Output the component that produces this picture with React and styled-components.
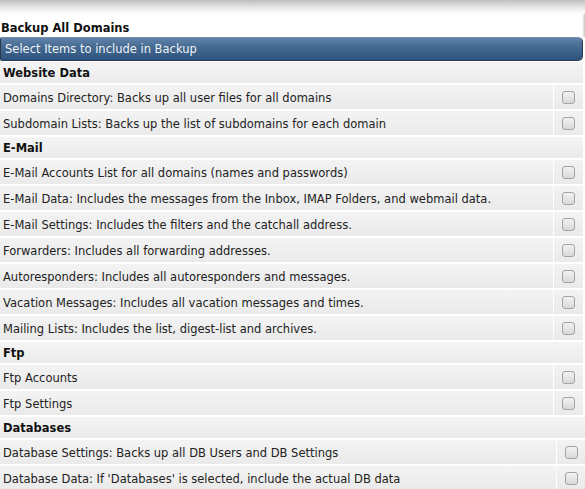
import React from 'react';
import styled, { createGlobalStyle } from 'styled-components';

const GlobalStyle = createGlobalStyle`
  body {
    margin: 0;
    background: #fff;
    font-family: "DejaVu Sans", Verdana, sans-serif;
    font-size: 11.5px;
    color: #222;
  }
`

const Page = styled.div`
  width: 585px;
`

const TopArea = styled.div`
  box-shadow: inset -3px 0 3px -2px #b5b5b5;
`

const TopShade = styled.div`
  height: 14px;
  background: linear-gradient(#bfbfbf, #eaeaea 60%, #fff);
`

const Title = styled.h1`
  margin: 0;
  height: 23px;
  line-height: 28px;
  padding-left: 1px;
  font-size: 11.5px;
  font-weight: bold;
  color: #111;
`

const HeaderBar = styled.div`
  width: 583px;
  height: 24px;
  box-sizing: border-box;
  margin-bottom: 1px;
  padding-left: 4px;
  line-height: 23px;
  color: #eef2f7;
  background: linear-gradient(#5f83aa, #44678e 45%, #2d5480);
  border: 1px solid #2a3a4c;
  border-top-color: #7a8ea5;
  border-radius: 2px 5px 5px 2px;
`

const Section = styled.div`
  display: flex;
  flex-direction: column;
  gap: 2px;
  width: ${({ wide }) => wide ? '585px' : '583px'};
  margin-bottom: 2px;
`

const SectionHead = styled.div`
  height: 21px;
  box-sizing: border-box;
  padding: 1px 0 0 3px;
  line-height: 21px;
  font-weight: bold;
  color: #111;
  background: linear-gradient(#f4f4f4, #ebebeb);
`

const Row = styled.div`
  display: flex;
  gap: 1px;
  height: 24px;
`

const Label = styled.div`
  flex: 1;
  box-sizing: border-box;
  padding: 1px 0 0 3px;
  line-height: 24px;
  white-space: nowrap;
  overflow: hidden;
  background: linear-gradient(#f3f3f3, #eaeaea);
`

const CheckCell = styled.div`
  width: ${({ wide }) => wide ? '28px' : '29px'};
  display: flex;
  align-items: center;
  justify-content: center;
  background: linear-gradient(#f3f3f3, #eaeaea);
`

const Check = styled.input.attrs({ type: 'checkbox' })`
  appearance: none;
  margin: 0;
  width: 13px;
  height: 13px;
  border: 1px solid #a3a3a3;
  border-radius: 3px;
  background: linear-gradient(#f2f2f2, #d9d9d9);
`

const sections = [
  {
    title: 'Website Data',
    items: [
      'Domains Directory: Backs up all user files for all domains',
      'Subdomain Lists: Backs up the list of subdomains for each domain',
    ],
  },
  {
    title: 'E-Mail',
    items: [
      'E-Mail Accounts List for all domains (names and passwords)',
      'E-Mail Data: Includes the messages from the Inbox, IMAP Folders, and webmail data.',
      'E-Mail Settings: Includes the filters and the catchall address.',
      'Forwarders: Includes all forwarding addresses.',
      'Autoresponders: Includes all autoresponders and messages.',
      'Vacation Messages: Includes all vacation messages and times.',
      'Mailing Lists: Includes the list, digest-list and archives.',
    ],
  },
  {
    title: 'Ftp',
    items: ['Ftp Accounts', 'Ftp Settings'],
  },
  {
    title: 'Databases',
    wide: true,
    items: [
      'Database Settings: Backs up all DB Users and DB Settings',
      "Database Data: If 'Databases' is selected, include the actual DB data",
    ],
  },
]

export default function App() {
  return (
    <Page>
      <GlobalStyle />
      <TopArea>
        <TopShade />
        <Title>Backup All Domains</Title>
      </TopArea>
      <HeaderBar>Select Items to include in Backup</HeaderBar>
      {sections.map(section => (
        <Section key={section.title} wide={section.wide}>
          <SectionHead>{section.title}</SectionHead>
          {section.items.map(item => (
            <Row key={item}>
              <Label>{item}</Label>
              <CheckCell wide={section.wide}>
                <Check />
              </CheckCell>
            </Row>
          ))}
        </Section>
      ))}
    </Page>
  )
}
